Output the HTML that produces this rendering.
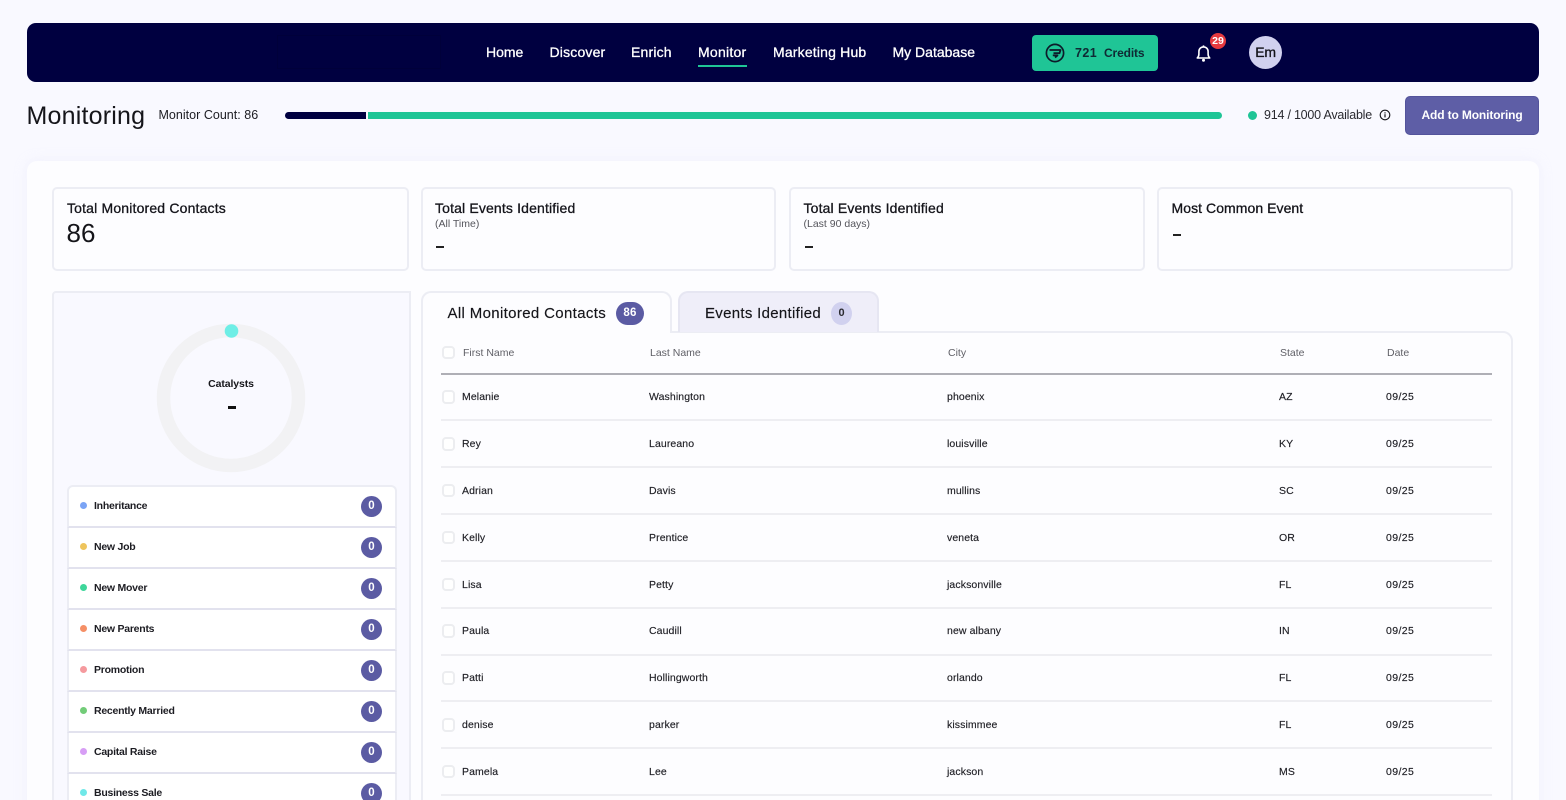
<!DOCTYPE html>
<html lang="en"><head><meta charset="utf-8"><title>Monitoring</title>
<style>
*{box-sizing:border-box}
html,body{margin:0;padding:0;width:1566px;height:800px;overflow:hidden;background:#f9f9ff;font-family:"Liberation Sans",sans-serif;color:#14141a}
#root{position:relative;width:1566px;height:800px;overflow:hidden}
.a{position:absolute}
.t{position:absolute;white-space:nowrap;line-height:20px;height:20px}
.nav{font-size:14px;font-weight:500;color:#fff;top:42px;letter-spacing:.18px;-webkit-text-stroke:.3px #fff}
.box{position:absolute;top:187px;height:84px;background:#fdfdff;border:2px solid #ecedf4;border-radius:5px}
.bt{font-size:14px;top:198px;letter-spacing:.15px;-webkit-text-stroke:.3px #14141a}
.sub{font-size:10.5px;top:214px;color:#55555c;letter-spacing:0}
.dash{position:absolute;width:8px;height:2px;background:#222;top:246px}
.row{position:absolute;left:67px;width:329.5px;height:41px;background:#fff;border-bottom:2px solid #e2e2ee;border-left:2px solid #ecedf4;border-right:2px solid #ecedf4}
.dot{position:absolute;left:10.5px;top:15px;width:7px;height:7px;border-radius:50%}
.lbl{position:absolute;left:25px;top:9px;font-size:10.5px;line-height:20px;font-weight:700;letter-spacing:-.25px;color:#1c1c22;white-space:nowrap}
.cnt{position:absolute;left:292px;top:8.5px;width:21px;height:21px;border-radius:50%;background:#5b5ba3;color:#fff;font-size:11.5px;font-weight:700;line-height:21px;text-align:center}
.cb{position:absolute;left:441.5px;width:13.5px;height:13.5px;border:2px solid #ecedf0;border-radius:4px;background:#fff}
.th{font-size:10.5px;color:#5f5f66;letter-spacing:0;top:343px}
.td{font-size:10.5px;color:#1e1e24;letter-spacing:.1px;-webkit-text-stroke:.15px #1e1e24}
.d{letter-spacing:.4px}
.ln{position:absolute;left:441px;width:1051px;height:2px;background:#eeeef2}
</style></head><body><div id="root">

<div class="a" style="left:26.5px;top:23px;width:1512.5px;height:59px;background:#000040;border-radius:9px"></div>
<div class="a" style="left:277px;top:35px;width:164px;height:34px;border:1px solid #00003a"></div>
<div class="t nav" style="left:486px;letter-spacing:0">Home</div>
<div class="t nav" style="left:549.5px">Discover</div>
<div class="t nav" style="left:631px">Enrich</div>
<div class="t nav" style="left:698px;letter-spacing:.25px">Monitor</div>
<div class="a" style="left:698px;top:65px;width:49px;height:2px;background:#1fc596"></div>
<div class="t nav" style="left:773px">Marketing Hub</div>
<div class="t nav" style="left:892.5px;letter-spacing:0">My Database</div>

<div class="a" style="left:1032px;top:34.5px;width:125.5px;height:36px;background:#1fc596;border-radius:4px"></div>
<svg class="a" style="left:1044px;top:42px" width="22" height="22" viewBox="0 0 22 22" fill="none"><circle cx="11" cy="11" r="8.6" stroke="#0d1b2a" stroke-width="1.7"/><path d="M5.500 8h11l-1 3.200H9.500M8.800 13.400h4.700l-2.500 2.100" stroke="#0d1b2a" stroke-width="1.8" stroke-linejoin="round"/></svg>
<div class="t" style="left:1075px;top:42.5px;font-size:12.5px;font-weight:700;letter-spacing:.4px;color:#0f2a34">721</div>
<div class="t" style="left:1104px;top:42.5px;font-size:12px;font-weight:700;letter-spacing:-.13px;color:#0f2a34">Credits</div>

<svg class="a" style="left:1194px;top:43px" width="19" height="20" viewBox="0 0 19 20" fill="none"><path d="M3.300 15c1-1 1.600-2.200 1.600-4V8.600c0-2.700 2-4.700 4.600-4.700s4.600 2 4.600 4.700V11c0 1.800.6 3 1.600 4z" stroke="#fff" stroke-width="1.6" stroke-linejoin="round"/><circle cx="9.500" cy="17.300" r="1.500" fill="#fff"/><rect x="8.700" y="2.400" width="1.600" height="2" fill="#fff"/></svg>
<div class="a" style="left:1210px;top:33px;width:16px;height:16px;border-radius:50%;background:#e5393f;color:#fff;font-size:10.5px;font-weight:700;line-height:16px;text-align:center">29</div>
<div class="a" style="left:1249px;top:36px;width:33px;height:33px;border-radius:50%;background:#d1d1ef;color:#14141a;font-size:14px;font-weight:500;line-height:33px;text-align:center;letter-spacing:-.3px;-webkit-text-stroke:.3px #14141a">Em</div>

<div class="t" style="left:26.5px;top:101px;height:30px;line-height:30px;font-size:25px;letter-spacing:.2px;color:#15151a">Monitoring</div>
<div class="t" style="left:158.5px;top:105px;font-size:12.5px;letter-spacing:.02px;color:#1c1c22">Monitor Count: 86</div>
<div class="a" style="left:285px;top:111.5px;width:80.5px;height:7px;background:#000040;border-radius:4px 0 0 4px"></div>
<div class="a" style="left:368px;top:111.5px;width:853.5px;height:7px;background:#1fc596;border-radius:0 4px 4px 0"></div>
<div class="a" style="left:1248px;top:110.5px;width:9px;height:9px;border-radius:50%;background:#1fc596"></div>
<div class="t" style="left:1264px;top:105px;font-size:12.5px;letter-spacing:-.22px;color:#2a2a30">914 / 1000 Available</div>
<svg class="a" style="left:1379px;top:109px" width="12" height="12" viewBox="0 0 12 12" fill="none"><circle cx="6" cy="6" r="4.8" stroke="#17171c" stroke-width="1.1"/><rect x="5.4" y="5.2" width="1.2" height="3.2" fill="#17171c"/><rect x="5.4" y="3.3" width="1.2" height="1.2" fill="#17171c"/></svg>
<div class="a" style="left:1405px;top:95.5px;width:134px;height:39px;background:#5e5ea6;border:1px solid #53539b;border-radius:5px;color:#fff;font-size:12px;font-weight:700;line-height:37px;text-align:center;letter-spacing:-.13px">Add to Monitoring</div>

<div class="a" style="left:27px;top:161px;width:1512px;height:660px;background:#fdfdff;border-radius:10px;box-shadow:0 0 12px rgba(225,225,245,.35)"></div>

<div class="box" style="left:52px;width:356.5px"></div>
<div class="t bt" style="left:67px;letter-spacing:.17px">Total Monitored Contacts</div>
<div class="t" style="left:66.5px;top:218px;height:30px;line-height:30px;font-size:26px;color:#15151a">86</div>

<div class="box" style="left:421px;width:355px"></div>
<div class="t bt" style="left:435px">Total Events Identified</div>
<div class="t sub" style="left:435px">(All Time)</div>
<div class="dash" style="left:436px"></div>

<div class="box" style="left:789px;width:355.5px"></div>
<div class="t bt" style="left:803.5px">Total Events Identified</div>
<div class="t sub" style="left:803.5px">(Last 90 days)</div>
<div class="dash" style="left:804.5px"></div>

<div class="box" style="left:1157px;width:356px"></div>
<div class="t bt" style="left:1171.5px;letter-spacing:.06px">Most Common Event</div>
<div class="dash" style="left:1173px;top:234px"></div>

<!-- left panel -->
<div class="a" style="left:52px;top:291px;width:358.5px;height:520px;background:#f9f9ff;border:2px solid #ecedf4;border-radius:4px 0 0 0"></div>
<svg class="a" style="left:155px;top:322px" width="152" height="152" viewBox="0 0 152 152" fill="none"><circle cx="76" cy="76" r="67.5" stroke="#f2f2f4" stroke-width="13.5"/><circle cx="76.5" cy="9" r="6.8" fill="#6eeee6"/></svg>
<div class="t" style="left:155px;width:152px;text-align:center;top:374px;font-size:10.5px;font-weight:700;letter-spacing:-.1px;color:#17171c">Catalysts</div>
<div class="a" style="left:227.5px;top:405.5px;width:8px;height:3px;background:#111"></div>

<div class="row" style="top:485px;height:43px;border-top:2px solid #ecedf4;border-radius:6px 6px 0 0"><span class="dot" style="background:#7ba4f5"></span><span class="lbl">Inheritance</span><span class="cnt">0</span></div>
<div class="row" style="top:528px"><span class="dot" style="background:#eec45c"></span><span class="lbl">New Job</span><span class="cnt">0</span></div>
<div class="row" style="top:569px"><span class="dot" style="background:#3ed69a"></span><span class="lbl">New Mover</span><span class="cnt">0</span></div>
<div class="row" style="top:610px"><span class="dot" style="background:#f58f66"></span><span class="lbl">New Parents</span><span class="cnt">0</span></div>
<div class="row" style="top:651px"><span class="dot" style="background:#f59a9e"></span><span class="lbl">Promotion</span><span class="cnt">0</span></div>
<div class="row" style="top:692px"><span class="dot" style="background:#72cc78"></span><span class="lbl">Recently Married</span><span class="cnt">0</span></div>
<div class="row" style="top:733px"><span class="dot" style="background:#d79ef5"></span><span class="lbl">Capital Raise</span><span class="cnt">0</span></div>
<div class="row" style="top:774px"><span class="dot" style="background:#70e8e8"></span><span class="lbl">Business Sale</span><span class="cnt">0</span></div>

<!-- table panel -->
<div class="a" style="left:421px;top:331px;width:1091.5px;height:490px;background:#fdfdff;border:2px solid #ecedf4;border-radius:0 10px 0 0"></div>
<div class="a" style="left:678px;top:291px;width:201px;height:41px;background:#efeef9;border:2px solid #e6e6f2;border-bottom:0;border-radius:10px 10px 0 0"></div>
<div class="a" style="left:421px;top:291px;width:250.5px;height:42px;background:#fdfdff;border:2px solid #ecedf4;border-bottom:0;border-radius:10px 10px 0 0"></div>
<div class="t" style="left:447.5px;top:304px;font-size:15px;letter-spacing:.35px;color:#15151a;-webkit-text-stroke:.15px #15151a">All Monitored Contacts</div>
<div class="a" style="left:616px;top:301.5px;width:28px;height:23px;border-radius:12px;background:#5b5ba3;color:#fff;font-size:11.5px;font-weight:700;line-height:23px;text-align:center;letter-spacing:.2px">86</div>
<div class="t" style="left:705px;top:304px;font-size:15px;letter-spacing:.3px;color:#15151a;-webkit-text-stroke:.15px #15151a">Events Identified</div>
<div class="a" style="left:831px;top:301.5px;width:21px;height:23px;border-radius:50%;background:#d1d1ef;color:#2a2a30;font-size:11px;font-weight:700;line-height:23px;text-align:center">0</div>

<div class="cb" style="top:345.5px"></div>
<div class="t th" style="left:463px">First Name</div>
<div class="t th" style="left:650px">Last Name</div>
<div class="t th" style="left:948px">City</div>
<div class="t th" style="left:1280px">State</div>
<div class="t th" style="left:1387px">Date</div>
<div class="a" style="left:441px;top:373px;width:1051px;height:1.5px;background:#afafb6"></div>

<div class="cb" style="top:390px"></div><div class="t td" style="left:462px;top:387px">Melanie</div><div class="t td" style="left:649px;top:387px">Washington</div><div class="t td" style="left:947px;top:387px">phoenix</div><div class="t td" style="left:1279px;top:387px">AZ</div><div class="t td d" style="left:1386px;top:387px">09/25</div><div class="ln" style="top:419px"></div>
<div class="cb" style="top:437px"></div><div class="t td" style="left:462px;top:434px">Rey</div><div class="t td" style="left:649px;top:434px">Laureano</div><div class="t td" style="left:947px;top:434px">louisville</div><div class="t td" style="left:1279px;top:434px">KY</div><div class="t td d" style="left:1386px;top:434px">09/25</div><div class="ln" style="top:466px"></div>
<div class="cb" style="top:483.5px"></div><div class="t td" style="left:462px;top:481px">Adrian</div><div class="t td" style="left:649px;top:481px">Davis</div><div class="t td" style="left:947px;top:481px">mullins</div><div class="t td" style="left:1279px;top:481px">SC</div><div class="t td d" style="left:1386px;top:481px">09/25</div><div class="ln" style="top:513px"></div>
<div class="cb" style="top:530.5px"></div><div class="t td" style="left:462px;top:528px">Kelly</div><div class="t td" style="left:649px;top:528px">Prentice</div><div class="t td" style="left:947px;top:528px">veneta</div><div class="t td" style="left:1279px;top:528px">OR</div><div class="t td d" style="left:1386px;top:528px">09/25</div><div class="ln" style="top:560px"></div>
<div class="cb" style="top:577.5px"></div><div class="t td" style="left:462px;top:575px">Lisa</div><div class="t td" style="left:649px;top:575px">Petty</div><div class="t td" style="left:947px;top:575px">jacksonville</div><div class="t td" style="left:1279px;top:575px">FL</div><div class="t td d" style="left:1386px;top:575px">09/25</div><div class="ln" style="top:607px"></div>
<div class="cb" style="top:624px"></div><div class="t td" style="left:462px;top:621px">Paula</div><div class="t td" style="left:649px;top:621px">Caudill</div><div class="t td" style="left:947px;top:621px">new albany</div><div class="t td" style="left:1279px;top:621px">IN</div><div class="t td d" style="left:1386px;top:621px">09/25</div><div class="ln" style="top:654px"></div>
<div class="cb" style="top:671px"></div><div class="t td" style="left:462px;top:668px">Patti</div><div class="t td" style="left:649px;top:668px">Hollingworth</div><div class="t td" style="left:947px;top:668px">orlando</div><div class="t td" style="left:1279px;top:668px">FL</div><div class="t td d" style="left:1386px;top:668px">09/25</div><div class="ln" style="top:700px"></div>
<div class="cb" style="top:718px"></div><div class="t td" style="left:462px;top:715px">denise</div><div class="t td" style="left:649px;top:715px">parker</div><div class="t td" style="left:947px;top:715px">kissimmee</div><div class="t td" style="left:1279px;top:715px">FL</div><div class="t td d" style="left:1386px;top:715px">09/25</div><div class="ln" style="top:747px"></div>
<div class="cb" style="top:764.5px"></div><div class="t td" style="left:462px;top:762px">Pamela</div><div class="t td" style="left:649px;top:762px">Lee</div><div class="t td" style="left:947px;top:762px">jackson</div><div class="t td" style="left:1279px;top:762px">MS</div><div class="t td d" style="left:1386px;top:762px">09/25</div><div class="ln" style="top:794px"></div>

</div></body></html>
